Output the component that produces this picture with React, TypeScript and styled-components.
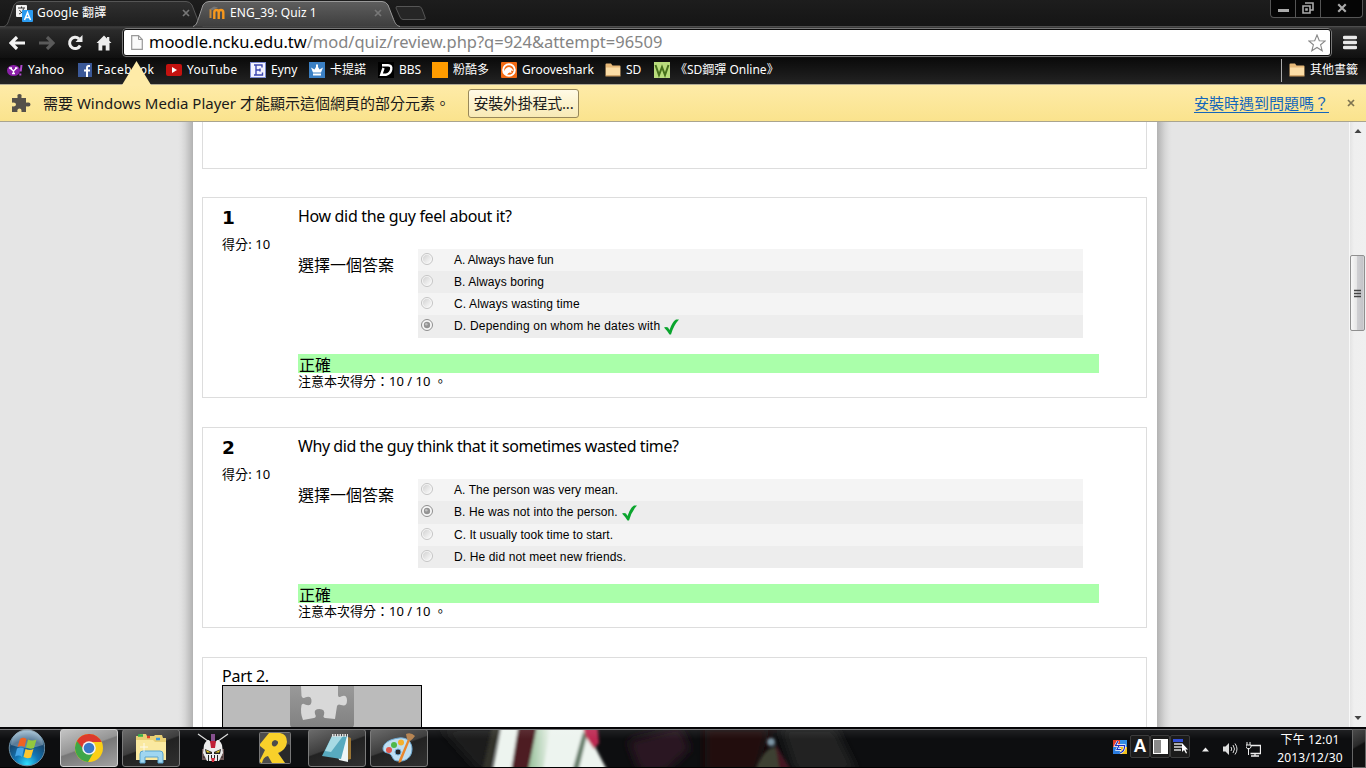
import React from "react";
import styled, { createGlobalStyle } from "styled-components";

const ui = `"Noto Sans", "Noto Sans CJK TC", sans-serif`;

const Global = createGlobalStyle`
  * { box-sizing: border-box; }
  body { margin: 0; overflow: hidden; background: #e5e5e5; }
`;

const Screen = styled.div`
  width: 1366px;
  height: 768px;
  display: flex;
  flex-direction: column;
  overflow: hidden;
  font-family: ${ui};
  color: #000;
`;

const Text = styled.span<{ $ls?: number }>`
  letter-spacing: ${(p) => p.$ls ?? 0}px;
  white-space: pre;
`;

/* ---------- tab strip ---------- */

const TabStrip = styled.div`
  height: 26px;
  flex: none;
  display: flex;
  align-items: flex-start;
  background: linear-gradient(#1d1d1d, #151515);
  padding-left: 4px;
`;

const Tab = styled.div<{ $w: number; $active?: boolean }>`
  display: grid;
  width: ${(p) => p.$w}px;
  height: 26px;
  margin-left: ${(p) => (p.$active ? -11 : 0)}px;
  z-index: ${(p) => (p.$active ? 2 : 1)};
  > * { grid-area: 1 / 1; }
`;

const TabContent = styled.div<{ $gap: number; $pad: number; $right: number }>`
  display: flex;
  align-items: center;
  height: 26px;
  padding: 0 ${(p) => p.$right}px 0 ${(p) => p.$pad}px;
  gap: ${(p) => p.$gap}px;
  color: #fff;
  font-size: 12px;
  line-height: 16px;
  z-index: 1;
  > svg:last-child { margin-left: auto; }
`;

const NewTab = styled.svg`
  margin: 5px 0 0 -6px;
`;

const WindowControls = styled.div`
  margin-left: auto;
  margin-right: 3px;
  display: flex;
  height: 18px;
  border: 1px solid #555;
  border-top: none;
  border-radius: 0 0 4px 4px;
  background: #050505;
`;

const WinButton = styled.div<{ $w: number }>`
  width: ${(p) => p.$w}px;
  display: flex;
  align-items: center;
  justify-content: center;
  padding-bottom: 1px;
  & + & { border-left: 1px solid #555; }
`;

/* ---------- toolbar ---------- */

const Toolbar = styled.div`
  height: 32px;
  flex: none;
  display: flex;
  align-items: center;
  background: linear-gradient(#3d3d3d 0, #2b2b2b 3px, #101010 100%);
  border-top: 1px solid #4d4d4d;
  padding: 0 0 0 9px;
`;

const NavIcons = styled.div`
  display: flex;
  gap: 12px;
  width: 113px;
  align-items: center;
  svg { flex: none; }
`;

const Omnibox = styled.div`
  width: 1210px;
  height: 29px;
  display: flex;
  align-items: center;
  background: #fff;
  border: 2px solid #0a0a0a;
  outline: 1px solid #777;
  outline-offset: -1px;
  border-radius: 4px;
  padding: 0 4px 0 7px;
  font-size: 16.5px;
  line-height: 22px;
  color: #000;
  svg:last-child { margin-left: auto; }
`;

const Url = styled.div`
  margin: -1px 0 0 6px;
  white-space: pre;
  letter-spacing: -0.02px;
`;

const UrlPath = styled.span`
  color: #848484;
`;

const MenuIcon = styled.svg`
  margin-left: 11px;
`;

/* ---------- bookmarks ---------- */

const Bookmarks = styled.div`
  height: 26px;
  flex: none;
  display: flex;
  align-items: center;
  background: linear-gradient(#0a0a0a, #232323);
  padding: 0 0 2px 7px;
  color: #fff;
  font-size: 12px;
  line-height: 16px;
  position: relative;
`;

const Bookmark = styled.div<{ $w: number }>`
  width: ${(p) => p.$w}px;
  display: flex;
  align-items: center;
  gap: 5px;
  flex: none;
  svg { flex: none; }
`;

const OtherBookmarks = styled.div`
  margin-left: auto;
  height: 23px;
  border-left: 1px solid #aaa;
  padding: 0 8px 0 7px;
  display: flex;
  align-items: center;
  gap: 5px;
`;

const Pointer = styled.svg`
  position: absolute;
  left: 122px;
  top: 1px;
  z-index: 3;
`;

/* ---------- info bar ---------- */

const InfoBar = styled.div`
  height: 38px;
  flex: none;
  display: flex;
  align-items: center;
  background: linear-gradient(#feeba8, #fae38d);
  border-top: 1px solid #b0aa95;
  border-bottom: 1px solid #a9a48f;
  padding: 0 11px 0 11px;
  font-size: 15px;
  line-height: 20px;
  color: #1a1a1a;
`;

const InfoMessage = styled(Text)`
  margin-left: 12px;
  width: 414px;
`;

const InstallButton = styled.div`
  width: 111px;
  height: 29px;
  border: 1px solid #97875a;
  border-radius: 3px;
  background: linear-gradient(#fffae6, #f8eab5);
  display: flex;
  align-items: center;
  justify-content: center;
  margin-left: 11px;
  font-size: 15px;
  letter-spacing: -0.25px;
`;

const HelpLink = styled.span`
  margin-left: auto;
  margin-right: 18px;
  color: #1466bb;
  font-size: 15px;
  text-decoration: underline;
  text-underline-offset: 3px;
  white-space: nowrap;
`;

/* ---------- page ---------- */

const Viewport = styled.div`
  height: 605px;
  flex: none;
  display: flex;
  background: #e5e5e5;
  overflow: hidden;
`;

const Shade = styled.div<{ $side: "left" | "right" }>`
  width: 15px;
  margin-left: ${(p) => (p.$side === "left" ? 178 : 0)}px;
  background: linear-gradient(
    to ${(p) => p.$side},
    #b2b2b2 0, #c4c4c4 4px, #d6d6d6 8px, #e1e1e1 12px, #e5e5e5 15px
  );
`;

const Page = styled.div`
  width: 964px;
  background: #fff;
  padding: 0 10px 0 9px;
  display: flex;
  flex-direction: column;
  gap: 29px;
`;

const Card = styled.div<{ $h: number }>`
  flex: none;
  height: ${(p) => p.$h}px;
  border: 1px solid #ddd;
  display: flex;
  padding: 0 0 0 19px;
`;

const ContinuedCard = styled(Card)`
  border-top: none;
  margin-bottom: -1px;
`;

const PartCard = styled(Card)`
  flex-direction: column;
  padding-top: 8px;
  font-size: 16px;
  line-height: 20px;
`;

const InfoColumn = styled.div`
  width: 76px;
  padding-top: 8px;
  font-size: 13px;
`;

const QuestionNumber = styled.div`
  font: bold 18.5px/24px "DejaVu Sans", sans-serif;
  letter-spacing: -0.5px;
`;

const Grade = styled.div`
  margin-top: 6px;
  line-height: 16px;
  letter-spacing: 0.1px;
  white-space: nowrap;
`;

const QuestionColumn = styled.div`
  width: 801px;
  padding-top: 8px;
  font-size: 16px;
  line-height: 20px;
`;

const AnswerArea = styled.div`
  display: flex;
  margin-top: 23px;
  height: 89px;
`;

const Prompt = styled.div`
  width: 120px;
  padding-top: 6px;
`;

const Answers = styled.div`
  width: 665px;
`;

const Answer = styled.div<{ $odd: boolean; $chosen: boolean }>`
  height: ${(p) => (p.$chosen ? 23 : 22)}px;
  background: ${(p) => (p.$odd ? "#ededed" : "#f4f4f4")};
  display: flex;
  align-items: center;
  padding: 0 0 ${(p) => (p.$chosen ? 2 : 1)}px 3px;
  font: 12px/16px "Liberation Sans", Arial, sans-serif;
`;

const Radio = styled.svg`
  flex: none;
  margin: -1px 21px 0 0;
`;

const Tick = styled.svg`
  margin: 3px 0 0 4px;
`;

const Outcome = styled.div`
  margin-top: 16px;
  height: 19px;
  background: #aaffaa;
  padding: 1px 0 0 1px;
`;

const Points = styled.div`
  font-size: 13px;
  line-height: 17px;
  white-space: pre;
`;

const PluginBox = styled.div`
  width: 200px;
  height: 60px;
  margin-top: -1px;
  border: 1px solid #000;
  background: #bbb;
  display: flex;
  justify-content: center;
  overflow: hidden;
  svg { flex: none; }
`;

const Scrollbar = styled.div`
  margin-left: auto;
  width: 17px;
  border-left: 1px solid #f8f8f8;
  background: linear-gradient(to right, #e4e4e4, #efefef 4px, #f0f0f0);
  display: flex;
  flex-direction: column;
  align-items: flex-start;
`;

const Thumb = styled.div`
  width: 15px;
  height: 76px;
  margin-top: 116px;
  margin-bottom: auto;
  border: 1px solid #8f8f8f;
  border-radius: 2px;
  background: linear-gradient(to right, #f8f8f8, #e6e6e6 45%, #cfcfd2 50%, #c4c4c8 90%, #ddd);
  display: flex;
  align-items: center;
  justify-content: center;
`;

/* ---------- taskbar ---------- */

const Taskbar = styled.div`
  height: 41px;
  flex: none;
  display: grid;
  background: #0d0e10;
  > * { grid-area: 1 / 1; }
`;

const TaskRow = styled.div`
  display: flex;
  height: 41px;
  padding-top: 2px;
  padding-left: 7px;
  z-index: 1;
`;

const Start = styled.svg`
  flex: none;
  margin-right: 15px;
`;

const Task = styled.div<{ $kind: "active" | "open" | "pinned" }>`
  width: 58px;
  height: 38px;
  flex: none;
  margin-right: 4px;
  display: flex;
  align-items: center;
  justify-content: center;
  border-radius: 3px;
  border: 1px solid
    ${(p) => (p.$kind === "pinned" ? "transparent" : p.$kind === "active" ? "#d0d0d0" : "#7b7b7b")};
  background: ${(p) =>
    p.$kind === "active"
      ? "linear-gradient(160deg, #c4c4c4 0%, #959595 45%, #777 48%, #a2a2a2 100%)"
      : p.$kind === "open"
      ? "linear-gradient(160deg, #6b6b6b 0%, #3e3e3e 45%, #222 48%, #303030 100%)"
      : "none"};
`;

const Tray = styled.div`
  margin-left: auto;
  display: flex;
  align-items: center;
`;

const ImeBar = styled.div`
  display: flex;
  margin: -5px 12px 0 0;
`;

const ImeButton = styled.div`
  width: 20px;
  height: 23px;
  border: 1px solid #3c3c3c;
  border-radius: 2px;
  background: #1b1b1b;
  display: flex;
  align-items: center;
  justify-content: center;
  color: #fff;
  font: bold 18px/20px "Liberation Sans", sans-serif;
`;

const TrayIcon = styled.svg<{ $gap?: number }>`
  flex: none;
  margin: 1px 0 0 ${(p) => p.$gap ?? 0}px;
`;

const Clock = styled.div`
  width: 84px;
  text-align: center;
  color: #fff;
  font-size: 12px;
  letter-spacing: 0.15px;
  line-height: 18px;
  margin: 1px 0 0 7px;
  white-space: nowrap;
`;

const ShowDesktop = styled.div`
  width: 14px;
  height: 39px;
  border: 1px solid #666;
  background: linear-gradient(150deg, #4a4a4a 0, #2a2a2a 40%, #111 45%);
`;

/* ---------- drawings ---------- */

const CloseX = ({ color = "#777", size = 8 }: { color?: string; size?: number }) => (
  <svg width={size} height={size} viewBox="0 0 8 8">
    <path d="M1 1l6 6M7 1l-6 6" stroke={color} strokeWidth="1.7" />
  </svg>
);

const TabShape = ({ w, active }: { w: number; active?: boolean }) => (
  <svg width={w} height="27" viewBox={`0 0 ${w} 27`}>
    <defs>
      <linearGradient id={active ? "ta" : "tb"} x2="0" y2="1">
        <stop offset="0" stopColor={active ? "#5e5e5e" : "#303030"} />
        <stop offset="1" stopColor={active ? "#3e3e3e" : "#1e1e1e"} />
      </linearGradient>
    </defs>
    <path
      d={`M0 26.5C4 25 4 22 6 17L10 5Q12 1.500 16 1.500H${w - 18}Q${w - 14} 1.500 ${w - 12} 5L${w - 7} 18C${w - 5} 23 ${w - 4} 25.500 ${w} 26.500`}
      fill={`url(#${active ? "ta" : "tb"})`}
      stroke={active ? "#999" : "#555"}
    />
  </svg>
);

const TranslateIcon = () => (
  <svg width="17" height="17" viewBox="0 0 17 17">
    <rect x="0" y="0" width="11" height="12" rx="1" fill="#f4f4f4" />
    <path d="M2 3h7M5.500 1.500V3M3 9c3-1 4-3 4.500-5.500M3.500 5c1 2 2.500 3 4 4" stroke="#333" fill="none" />
    <rect x="6" y="5" width="11" height="12" rx="1" fill="#2b9bf0" />
    <path d="M8.500 15L11.500 7.500L14.500 15M9.500 12.500h4" stroke="#fff" strokeWidth="1.500" fill="none" />
  </svg>
);

const MoodleIcon = () => (
  <svg width="16" height="14" viewBox="0 0 16 14">
    <path d="M5.300 13V6.500Q5.300 4 7.500 4T9.700 6.500V13M9.700 6.500Q9.700 4 12 4T14.300 6.500V13" stroke="#f7981d" strokeWidth="2.400" fill="none" />
    <path d="M0 3.500L5 0.500L9 1.500L4 4Z" fill="#777" />
    <path d="M1.500 3.500V12" stroke="#c98a3a" strokeWidth="2" />
  </svg>
);

const BackIcon = ({ color, flip }: { color: string; flip?: boolean }) => (
  <svg width="17" height="14" viewBox="0 0 17 14">
    <g transform={flip ? "translate(17 0) scale(-1 1)" : undefined}>
      <path d="M8 1L2 7L8 13M2.500 7H16" stroke={color} strokeWidth="3.200" fill="none" />
    </g>
  </svg>
);

const ReloadIcon = () => (
  <svg width="17" height="16" viewBox="0 0 17 16">
    <path d="M13.200 10.500A5.600 5.600 0 1 1 12 3.800" stroke="#eee" strokeWidth="3" fill="none" />
    <path d="M15.500 0V7H8.500Z" fill="#eee" />
  </svg>
);

const HomeIcon = () => (
  <svg width="16" height="16" viewBox="0 0 16 16">
    <path d="M8 0.500L0.500 8H2.500V15.500H6.300V10.500H9.700V15.500H13.500V8H15.500L13.300 5.700V2H11V3.500Z" fill="#eee" />
  </svg>
);

const PageIcon = () => (
  <svg width="12" height="15" viewBox="0 0 12 15">
    <path d="M0.700 0.700H7.500L11.300 4.500V14.300H0.700Z" fill="#fafafa" stroke="#999" strokeWidth="1.200" />
    <path d="M7.500 0.700V4.500H11.300" fill="none" stroke="#999" />
  </svg>
);

const StarIcon = () => (
  <svg width="18" height="18" viewBox="0 0 18 18">
    <path d="M9 1L11.300 6.700L17.200 7L12.600 10.800L14.200 16.800L9 13.500L3.800 16.800L5.400 10.800L0.800 7L6.700 6.700Z" fill="#fff" stroke="#888" strokeWidth="1.100" />
  </svg>
);

const FolderIcon = () => (
  <svg width="16" height="14" viewBox="0 0 16 14">
    <path d="M0.500 13V1.500Q0.500 0.500 1.500 0.500H6L7.500 2.500H14.500Q15.500 2.500 15.500 3.500V13Z" fill="#e6b878" />
    <path d="M1 12V4.500H15V12Z" fill="#fbdda6" />
    <path d="M0.500 13.300H15.500" stroke="#8b6d45" />
  </svg>
);

const YahooIcon = () => (
  <svg width="16" height="14" viewBox="0 0 16 14">
    <ellipse cx="6.500" cy="7.500" rx="6.500" ry="5.500" fill="#8a1fa8" />
    <path d="M3 5L6.500 8L9.500 5M6.500 8V10.500M2 5H5M8 5H10.500M5 10.500H8" stroke="#fff" strokeWidth="1.300" fill="none" />
    <path d="M14.500 2L13.700 8.500M13.300 10.500V12.500" stroke="#b14bd0" strokeWidth="2" />
  </svg>
);

const FacebookIcon = () => (
  <svg width="14" height="14" viewBox="0 0 14 14">
    <rect width="14" height="14" fill="#3b5998" />
    <path d="M12 3H10.500Q9 3 9 5V14M6 7.500H12" stroke="#fff" strokeWidth="2" fill="none" />
  </svg>
);

const YouTubeIcon = () => (
  <svg width="16" height="12" viewBox="0 0 16 12">
    <rect width="16" height="12" rx="2" fill="#c4120f" />
    <path d="M6 3L11 6L6 9Z" fill="#fff" />
  </svg>
);

const EynyIcon = () => (
  <svg width="16" height="16" viewBox="0 0 16 16">
    <rect x="0.500" y="0.500" width="15" height="15" fill="#f2f2ff" stroke="#7c8ad0" />
    <path d="M4 3H12V5.500M4 13H12.500V10.500M6 3V13M6 8H10M10 6.500V9.500" stroke="#3b46b0" strokeWidth="1.400" fill="none" />
  </svg>
);

const CrownIcon = () => (
  <svg width="16" height="16" viewBox="0 0 16 16">
    <rect width="16" height="16" fill="#3b80c4" />
    <path d="M4 10.500L2 5.500L5.500 7.500L7 5V2.500H9V5L10.500 7.500L14 5.500L12 10.500ZM4 11.500H12V13.500H4Z" fill="#fff" />
  </svg>
);

const BbsIcon = () => (
  <svg width="16" height="16" viewBox="0 0 16 16">
    <rect width="16" height="16" fill="#000" />
    <path d="M4 3.200H10Q14 3.200 13.200 7.500T8 12.700H3.200L5.500 6" stroke="#fff" strokeWidth="2.400" fill="none" />
  </svg>
);

const OrangeIcon = () => (
  <svg width="16" height="16"><rect width="16" height="16" fill="#ff9c00" /></svg>
);

const GroovesharkIcon = () => (
  <svg width="16" height="16" viewBox="0 0 16 16">
    <rect width="16" height="16" rx="1" fill="#f26a13" />
    <circle cx="8" cy="8" r="5.800" fill="none" stroke="#fff" strokeWidth="2" />
    <path d="M2.500 11Q4 5.500 8 5Q11 5.500 12.500 9L10 8.500L10.500 11Q8 9 5.500 13.500Z" fill="#fff" />
  </svg>
);

const WIcon = () => (
  <svg width="16" height="16" viewBox="0 0 16 16">
    <rect width="16" height="16" fill="#b9dc7c" />
    <path d="M1.500 3L5 13L8 5L11 13L14.500 3" stroke="#47701c" strokeWidth="2" fill="none" />
  </svg>
);

const PuzzleIcon = () => (
  <svg width="20" height="20" viewBox="0 0 20 20">
    <path
      d="M1 5H6Q7 5 6.500 3.500Q5.800 1 8.500 1T10.500 3.500Q10 5 11 5H15V9Q15 10 16.500 9.500Q19.500 9 19.500 11.500T16.500 13.500Q15 13 15 14V19H11Q10 19 10.500 17.500Q10.500 15.500 8.500 15.500T6.300 17.500Q7 19 6 19H1V14Q1 13 2.500 13.500Q5 13.500 5 11.500T2.500 9.500Q1 10 1 9Z"
      fill="#55504a"
    />
  </svg>
);

const RadioIcon = ({ on }: { on: boolean }) => (
  <Radio width="12" height="12" viewBox="0 0 12 12">
    <defs>
      <linearGradient id="rg" x2="1" y2="1">
        <stop offset="0" stopColor="#d2d2d2" />
        <stop offset="1" stopColor="#fbfbfb" />
      </linearGradient>
    </defs>
    <circle cx="6" cy="6" r="5.500" fill="#f8f8f8" stroke={on ? "#8e8e8e" : "#c4c4c4"} />
    <circle cx="6" cy="6" r={on ? 3.2 : 4.2} fill={on ? "#949494" : "url(#rg)"} />
    {on && <circle cx="5.300" cy="5.300" r="1.300" fill="#c0c0c0" />}
  </Radio>
);

const TickIcon = () => (
  <Tick width="15" height="16" viewBox="0 0 15 16">
    <path d="M0 8.500Q2 7.500 4 8.500L5.500 11Q8 3 12 0.500H15Q9.500 6.500 7 15.500H5.500Q3 11.500 0 8.500Z" fill="#0ba52e" />
  </Tick>
);

const PluginPiece = () => (
  <svg width="64" height="42" viewBox="0 0 64 42">
    <defs>
      <linearGradient id="pp" x2="0" y2="1">
        <stop offset="0" stopColor="#999" />
        <stop offset="1" stopColor="#818181" />
      </linearGradient>
    </defs>
    <path d="M0 0H64V38Q64 42 60 42H4Q0 42 0 38Z" fill="url(#pp)" />
    <path
      d="M11 0H48V9Q48 12 51 10.500Q57 8 57 14.500T51 19Q48 17.500 47 20L45 33L35 32Q32.500 31 34 29Q35.500 23 29.500 23T25 28Q27 31 24 32L13 34Q10 27 11.500 19Q13 17 15 18.500Q21.500 21 21.500 15T15 11.500Q12.500 13 11.500 10Z"
      fill="#d8d8d8"
    />
  </svg>
);

const StartOrb = () => (
  <Start width="38" height="38" viewBox="0 0 38 38">
    <defs>
      <radialGradient id="orb" cx="0.5" cy="0.95" r="0.95">
        <stop offset="0" stopColor="#2fe0ff" />
        <stop offset="0.35" stopColor="#1275b5" />
        <stop offset="0.7" stopColor="#19486f" />
        <stop offset="1" stopColor="#8eb4cc" />
      </radialGradient>
    </defs>
    <circle cx="20" cy="19" r="17.800" fill="url(#orb)" stroke="#6c8fa5" />
    <path d="M4 16A16 16 0 0 1 36 16Q20 22 4 16Z" fill="#fff" opacity="0.28" />
    <path d="M13 10Q16 7.500 19.500 10L17.500 18Q14 16 10.500 18Z" fill="#ee6322" />
    <path d="M21 10.500Q25 12.500 29.500 10.500L27 19Q23 20.500 19 18.500Z" fill="#93c83e" />
    <path d="M10 19.500Q13.500 17.500 17 19.500L15 28Q12 25.500 8 27.500Z" fill="#44a4e6" />
    <path d="M18.500 20Q23 22 26.500 20L24 28.500Q20 30 16.500 28Z" fill="#fdc62f" />
  </Start>
);

const ChromeIcon = () => (
  <svg width="30" height="30" viewBox="0 0 30 30">
    <circle cx="15" cy="15" r="14" fill="#fbcf15" />
    <path d="M15 15L2.900 8A14 14 0 0 0 14 29L20.500 18Z" fill="#3fa648" />
    <path d="M2.900 8A14 14 0 0 1 27.600 9H15L10 17Z" fill="#dd3a2c" />
    <circle cx="15" cy="15" r="6.800" fill="#f4f4f4" />
    <circle cx="15" cy="15" r="5.300" fill="#3a78c8" />
  </svg>
);

const ExplorerIcon = () => (
  <svg width="34" height="32" viewBox="0 0 34 32">
    <path d="M2 28V4H5L6 2H12L13 4H20L21 3H28L29 6H32V28Z" fill="#e8cf74" />
    <path d="M4 3.500H9" stroke="#36b04a" strokeWidth="2.500" />
    <path d="M13 5H16" stroke="#e04028" strokeWidth="2.500" />
    <path d="M22 7H26" stroke="#3a9ae0" strokeWidth="2.500" />
    <path d="M2 8H19L21 10H32V28H2Z" fill="#fae9a0" />
    <path d="M6 31V22Q6 19 9 19H26Q29 19 29 22V31H24V25H11V31Z" fill="#9fd6f0" stroke="#5aa5cf" />
    <path d="M10 11V20M6 15H14" stroke="#fff" opacity="0.8" />
  </svg>
);

const RobotIcon = () => (
  <svg width="32" height="30" viewBox="0 0 32 30">
    <path d="M1 1L13 9.500M31 1L19 9.500" stroke="#ddd" strokeWidth="1.200" />
    <path d="M5 16H10V27H5ZM22 16H27V27H22Z" fill="#6b5555" />
    <path d="M6 18H9M6 21H9M6 24H9M23 18H26M23 21H26M23 24H26" stroke="#2a1d1d" />
    <path d="M7 12Q9 7 12 7L14 10H18L20 7Q23 7 25 12L26 20L22 28H10L6 20Z" fill="#ececec" />
    <path d="M14 1H18V9H14Z" fill="#86508e" />
    <path d="M13 8H19L18 15H14Z" fill="#c01f36" />
    <path d="M8 16L15 19V21H9ZM24 16L17 19V21H23Z" fill="#222" />
    <path d="M9 17L14 19.500H10ZM23 17L18 19.500H22Z" fill="#f3d528" />
    <path d="M11.500 22V28M20.500 22V28M14.500 22V25M17.500 22V25" stroke="#222" />
    <path d="M14 25H18L17 29H15Z" fill="#d32a3a" />
  </svg>
);

const BadgeIcon = () => (
  <svg width="32" height="32" viewBox="0 0 32 32">
    <rect x="0.500" y="0.500" width="31" height="31" rx="1" fill="#4c4c4c" stroke="#777" />
    <path d="M29 12L31 13V31H26L20 22Z" fill="#292929" />
    <path
      d="M10 1H21Q28 2 28 10Q27 18 19 21L26 31H3Q0.500 31 1 28L6 18L1 14V12ZM16 8Q12 9 13 13Q15 16 18 13Q21 9 16 8Z"
      fill="#f8d02a"
      fillRule="evenodd"
    />
    <path d="M3 31Q4 25 9 24L13 31Z" fill="#4c4c4c" />
  </svg>
);

const NotepadIcon = () => (
  <svg width="32" height="30" viewBox="0 0 32 30">
    <path d="M24 3L30 5V26L22 28Z" fill="#9a7535" />
    <path d="M12 3L27 4L27 29L18 27Z" fill="#eef5f7" />
    <path d="M11 3H26L20 26L1 23Z" fill="#58aabf" />
    <path d="M11 3H22L10 19L4 18Z" fill="#a7dae4" />
    <path d="M11 2.500H27" stroke="#ddd" strokeWidth="3" strokeDasharray="1.500 1" />
  </svg>
);

const PaintIcon = () => (
  <svg width="34" height="32" viewBox="0 0 34 32">
    <path
      d="M17 6C25 5 30 10 30 17C30 25 24 30 16 29C10 29 11 24 8 22C4 20 1 21 1 16C2 10 9 7 17 6ZM16 17A3 3 0 1 0 16 23A3 3 0 1 0 16 17Z"
      fill="#bfdff2"
      stroke="#6ea9d2"
      fillRule="evenodd"
    />
    <circle cx="7" cy="18" r="3" fill="#e2574c" />
    <circle cx="12" cy="13" r="3" fill="#4fb84a" />
    <circle cx="19" cy="10.500" r="3" fill="#f4b02c" />
    <path d="M28 8L19 30L16.500 31L17 28L26 7Z" fill="#e8862c" />
    <path d="M24 2Q29 0 33 4Q31 7 28 9L25 7Z" fill="#b78553" />
  </svg>
);

const Wallpaper = () => (
  <svg width="1366" height="41" viewBox="0 0 1366 41">
    <defs>
      <filter id="soft" x="-20%" y="-40%" width="140%" height="180%"><feGaussianBlur stdDeviation="1.8" /></filter>
      <filter id="haze" x="-20%" y="-40%" width="140%" height="180%"><feGaussianBlur stdDeviation="5" /></filter>
      <linearGradient id="mint" x1="0" x2="1">
        <stop offset="0" stopColor="#93bf96" />
        <stop offset="1" stopColor="#eef4ee" />
      </linearGradient>
      <linearGradient id="sheen" x2="0" y2="1">
        <stop offset="0" stopColor="#fff" stopOpacity="0.1" />
        <stop offset="1" stopColor="#fff" stopOpacity="0" />
      </linearGradient>
    </defs>
    <g filter="url(#haze)">
      <path d="M440 0H502L490 45H480Z" fill="#1d1d1d" />
      <path d="M628 14L680 0L690 22L665 45H640Z" fill="#291820" />
      <path d="M705 0H770L758 45H705Z" fill="#220b0c" />
      <path d="M780 0H835L857 45H795Z" fill="#202021" />
    </g>
    <g filter="url(#soft)">
      <path d="M492 0H501L490 45H482Z" fill="#30302a" />
      <path d="M502 -5H582L608 45H492Z" fill="#edf4ef" />
      <path d="M519 -5H538L528 45H511Z" fill="#4e1c22" />
      <path d="M538 -5H551L543 45H528Z" fill="url(#mint)" />
      <path d="M583 5L587 8L578 45H572Z" fill="#647a68" />
      <path d="M581 -5H597L599 16L594 22L586 10Z" fill="#bd2a52" />
      <path d="M755 45Q762 22 775 20L786 45Z" fill="#3e4132" />
      <path d="M775 16L792 45H780Z" fill="#451822" />
      <circle cx="771" cy="15" r="4" fill="#7d96a5" />
    </g>
    <rect width="1366" height="12" fill="url(#sheen)" />
    <rect width="1366" height="2" fill="#050507" />
    <rect y="2" width="1366" height="1" fill="#77777a" />
    <rect y="40" width="1366" height="1" fill="#000" />
  </svg>
);

const ColorIme = styled.svg`
  margin: 5px 3px 0 0;
`;

/* ---------- data ---------- */

const bookmarks = [
  { icon: <YahooIcon />, label: "Yahoo", w: 71, ls: 0.3 },
  { icon: <FacebookIcon />, label: "Facebook", w: 88, ls: 0.45 },
  { icon: <YouTubeIcon />, label: "YouTube", w: 84, ls: 0.3 },
  { icon: <EynyIcon />, label: "Eyny", w: 59, ls: 0 },
  { icon: <CrownIcon />, label: "卡提諾", w: 69, ls: 0 },
  { icon: <BbsIcon />, label: "BBS", w: 54, ls: -0.1 },
  { icon: <OrangeIcon />, label: "粉酷多", w: 69, ls: 0 },
  { icon: <GroovesharkIcon />, label: "Grooveshark", w: 104, ls: 0 },
  { icon: <FolderIcon />, label: "SD", w: 49, ls: 0 },
  { icon: <WIcon />, label: "《SD鋼彈 Online》", w: 130, ls: 0 },
];

const questions = [
  {
    title: "How did the guy feel about it?",
    ls: -0.34,
    answers: [
      { text: "A. Always have fun", ls: -0.1 },
      { text: "B. Always boring", ls: 0.08 },
      { text: "C. Always wasting time", ls: 0.14 },
      { text: "D. Depending on whom he dates with", ls: 0.2 },
    ],
    chosen: 3,
  },
  {
    title: "Why did the guy think that it sometimes wasted time?",
    ls: -0.43,
    answers: [
      { text: "A. The person was very mean.", ls: 0.06 },
      { text: "B. He was not into the person.", ls: 0.1 },
      { text: "C. It usually took time to start.", ls: 0.03 },
      { text: "D. He did not meet new friends.", ls: 0.13 },
    ],
    chosen: 1,
  },
];

export default function App() {
  return (
    <Screen>
      <Global />
      <TabStrip>
        <Tab $w={200}>
          <TabShape w={200} />
          <TabContent $gap={4} $pad={12} $right={14}>
            <TranslateIcon />
            <Text $ls={0.2}>Google 翻譯</Text>
            <CloseX />
          </TabContent>
        </Tab>
        <Tab $w={207} $active>
          <TabShape w={207} active />
          <TabContent $gap={5} $pad={16} $right={18}>
            <MoodleIcon />
            <Text $ls={0.1}>ENG_39: Quiz 1</Text>
            <CloseX />
          </TabContent>
        </Tab>
        <NewTab width="34" height="16" viewBox="0 0 34 16">
          <path d="M2.500 1.500H25Q27 1.500 28 4L31 12Q32 14.500 30 14.500H9Q7 14.500 6 12L2 3Z" fill="#262626" stroke="#555" />
        </NewTab>
        <WindowControls>
          <WinButton $w={24}>
            <svg width="11" height="12"><rect y="7" width="11" height="3" fill="#aaa" /></svg>
          </WinButton>
          <WinButton $w={25}>
            <svg width="12" height="12" viewBox="0 0 12 12">
              <path d="M3 1H11V8H8.500M1 4H8V11H1ZM4 7H5V8H4Z" fill="none" stroke="#aaa" strokeWidth="1.600" />
            </svg>
          </WinButton>
          <WinButton $w={42}><CloseX color="#aaa" size={10} /></WinButton>
        </WindowControls>
      </TabStrip>

      <Toolbar>
        <NavIcons>
          <BackIcon color="#f4f4f4" />
          <BackIcon color="#5a5a5a" flip />
          <ReloadIcon />
          <HomeIcon />
        </NavIcons>
        <Omnibox>
          <PageIcon />
          <Url>moodle.ncku.edu.tw<UrlPath>/mod/quiz/review.php?q=924&amp;attempt=96509</UrlPath></Url>
          <StarIcon />
        </Omnibox>
        <MenuIcon width="14" height="15" viewBox="0 0 14 15">
          <path d="M1.500 2.500H12.500M1.500 7.500H12.500M1.500 12.500H12.500" stroke="#e8e8e8" strokeWidth="3.400" strokeLinecap="round" />
        </MenuIcon>
      </Toolbar>

      <Bookmarks>
        {bookmarks.map((b) => (
          <Bookmark key={b.label} $w={b.w}>
            {b.icon}
            <Text $ls={b.ls}>{b.label}</Text>
          </Bookmark>
        ))}
        <OtherBookmarks>
          <FolderIcon />
          <Text>其他書籤</Text>
        </OtherBookmarks>
        <Pointer width="30" height="26" viewBox="0 0 30 26">
          <path d="M0 26L14.500 2L29 26Z" fill="#feeba8" />
        </Pointer>
      </Bookmarks>

      <InfoBar>
        <PuzzleIcon />
        <InfoMessage>需要 Windows Media Player 才能顯示這個網頁的部分元素。</InfoMessage>
        <InstallButton>安裝外掛程式...</InstallButton>
        <HelpLink>安裝時遇到問題嗎？</HelpLink>
        <CloseX color="#7d7350" />
      </InfoBar>

      <Viewport>
        <Shade $side="left" />
        <Page>
          <ContinuedCard $h={47} />
          {questions.map((q, n) => (
            <Card key={q.title} $h={201}>
              <InfoColumn>
                <QuestionNumber>{n + 1}</QuestionNumber>
                <Grade>得分: 10</Grade>
              </InfoColumn>
              <QuestionColumn>
                <Text $ls={q.ls}>{q.title}</Text>
                <AnswerArea>
                  <Prompt>選擇一個答案</Prompt>
                  <Answers>
                    {q.answers.map((a, i) => (
                      <Answer key={a.text} $odd={i % 2 === 1} $chosen={q.chosen === i}>
                        <RadioIcon on={q.chosen === i} />
                        <Text $ls={a.ls}>{a.text}</Text>
                        {q.chosen === i && <TickIcon />}
                      </Answer>
                    ))}
                  </Answers>
                </AnswerArea>
                <Outcome>正確</Outcome>
                <Points>注意本次得分：10 / 10 。</Points>
              </QuestionColumn>
            </Card>
          ))}
          <PartCard $h={120}>
            <Text $ls={-0.25}>Part 2.</Text>
            <PluginBox><PluginPiece /></PluginBox>
          </PartCard>
        </Page>
        <Shade $side="right" />
        <Scrollbar>
          <svg width="16" height="17" viewBox="0 0 16 17"><path d="M4.500 11L8 7L11.500 11Z" fill="#444" /></svg>
          <Thumb>
            <svg width="8" height="9"><path d="M0 1.500H7M0 4.500H7M0 7.500H7" stroke="#444" strokeWidth="1.500" /></svg>
          </Thumb>
          <svg width="16" height="17" viewBox="0 0 16 17"><path d="M4.500 6L8 10L11.500 6Z" fill="#444" /></svg>
        </Scrollbar>
      </Viewport>

      <Taskbar>
        <Wallpaper />
        <TaskRow>
          <StartOrb />
          <Task $kind="active"><ChromeIcon /></Task>
          <Task $kind="open"><ExplorerIcon /></Task>
          <Task $kind="pinned"><RobotIcon /></Task>
          <Task $kind="pinned"><BadgeIcon /></Task>
          <Task $kind="open"><NotepadIcon /></Task>
          <Task $kind="open"><PaintIcon /></Task>
          <Tray>
            <ImeBar>
              <ColorIme width="14" height="14" viewBox="0 0 14 14">
                <rect width="7" height="7" fill="#e23a26" />
                <rect x="7" width="7" height="7" fill="#2f8de4" />
                <rect y="7" width="7" height="7" fill="#2b7de0" />
                <rect x="7" y="7" width="7" height="7" fill="#f3c21d" />
                <path d="M5 1L2.500 5.500H11.500Q12 11 7 13M6 5.500L4 9.500H8" stroke="#fff" strokeWidth="2.400" fill="none" />
                <path d="M5 1L2.500 5.500H11.500Q12 11 7 13M6 5.500L4 9.500H8" stroke="#1b2ec4" strokeWidth="1.200" fill="none" />
              </ColorIme>
              <ImeButton>A</ImeButton>
              <ImeButton>
                <svg width="15" height="15"><rect width="15" height="15" fill="#fff" /><rect x="1" y="1" width="7" height="13" fill="#8a8a8a" /></svg>
              </ImeButton>
              <ImeButton>
                <svg width="15" height="15" viewBox="0 0 15 15">
                  <path d="M0 1.500H10" stroke="#3450d8" strokeWidth="3" />
                  <path d="M1 5H9M1 8H9M1 11H8" stroke="#ddd" strokeWidth="1.500" />
                  <path d="M9 4V13L11 11L13 14.500L14 14L12.500 10.500H15Z" fill="#fff" />
                </svg>
              </ImeButton>
            </ImeBar>
            <TrayIcon width="7" height="5" viewBox="0 0 7 5"><path d="M0 4.500L3.500 0.500L7 4.500Z" fill="#eee" /></TrayIcon>
            <TrayIcon $gap={14} width="15" height="14" viewBox="0 0 15 14">
              <path d="M0 4.500H2.500L6 1V13L2.500 9.500H0Z" fill="#ddd" />
              <path d="M8 5Q9.500 7 8 9M10 3Q13 7 10 11M12 1.500Q16 7 12 12.500" stroke="#ddd" fill="none" />
            </TrayIcon>
            <TrayIcon $gap={8} width="15" height="15" viewBox="0 0 15 15">
              <path d="M5 3.500H14.500V11.500H4.500M9 11.500V14M5 14H13" stroke="#eee" strokeWidth="1.300" fill="none" />
              <path d="M1 0V3M4 0V3M0 3H5V5Q4 7 2.500 7T0 5ZM2.500 6V13" stroke="#eee" fill="none" />
            </TrayIcon>
            <Clock>下午 12:01<br />2013/12/30</Clock>
            <ShowDesktop />
          </Tray>
        </TaskRow>
      </Taskbar>
    </Screen>
  );
}
